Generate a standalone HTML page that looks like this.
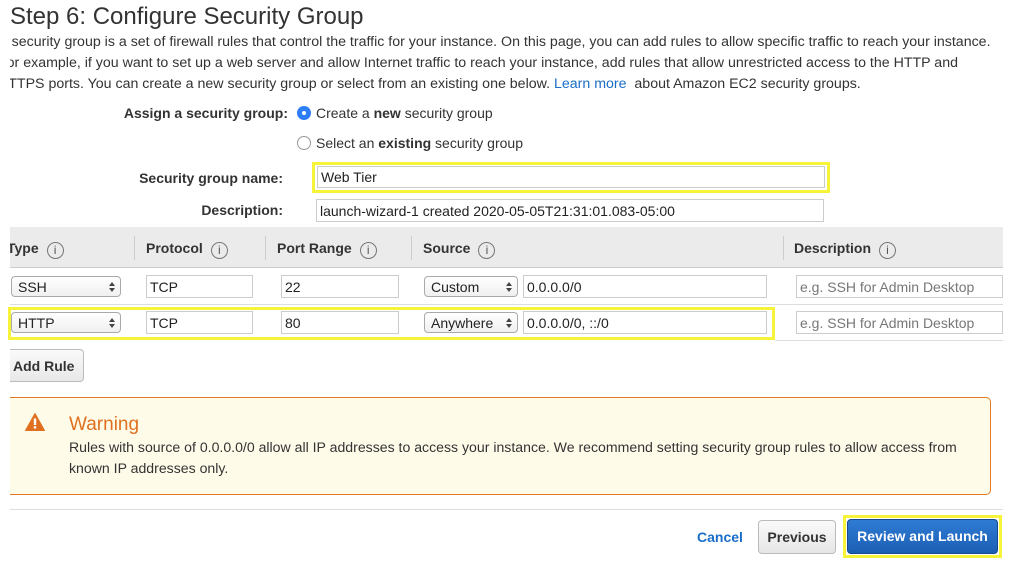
<!DOCTYPE html>
<html><head><meta charset="utf-8"><style>
*{box-sizing:border-box;margin:0;padding:0}
body{width:1009px;height:562px;background:#fff;font-family:"Liberation Sans",Arial,sans-serif;color:#333;position:relative;overflow:hidden;font-size:14px}
.a{position:absolute;white-space:nowrap}
.b{font-weight:bold}
.inp{position:absolute;border:1px solid #ccc;background:#fff;font-size:14px;padding-left:3px;display:flex;align-items:center;color:#222}
.sel{position:absolute;border:1px solid #aaa;border-radius:4px;background:linear-gradient(#fff,#f0f0f0);font-size:14px;padding-left:6px;display:flex;align-items:center;color:#222}
.sel::after{content:"";position:absolute;right:5px;top:50%;margin-top:-5px;width:0;height:0;border-left:3px solid transparent;border-right:3px solid transparent;border-bottom:4px solid #444}
.sel::before{content:"";position:absolute;right:5px;top:50%;margin-top:1px;width:0;height:0;border-left:3px solid transparent;border-right:3px solid transparent;border-top:4px solid #444}
.ic{display:inline-block;width:17px;height:17px;border:1px solid #777;border-radius:50%;font-size:12px;font-weight:normal;text-align:center;line-height:15px;color:#555;margin-left:8px;vertical-align:-1px}
.hd{font-weight:bold;font-size:14px;top:240px}
.sep{position:absolute;top:236px;width:1px;height:24px;background:#ccc}
.ph{color:#777}
</style></head><body>
<div class="a" style="left:10px;top:3px;font-size:24px;color:#333">Step 6: Configure Security Group</div>
<div class="a" style="left:10px;top:32px;width:999px;height:63px;overflow:hidden;font-size:14.2px;line-height:21px">
<div class="a" style="left:-11px;top:0">A security group is a set of firewall rules that control the traffic for your instance. On this page, you can add rules to allow specific traffic to reach your instance.</div>
<div class="a" style="left:-12px;top:21px">For example, if you want to set up a web server and allow Internet traffic to reach your instance, add rules that allow unrestricted access to the HTTP and</div>
<div class="a" style="left:-12px;top:42px">HTTPS ports. You can create a new security group or select from an existing one below. <span style="color:#1a6ec8">Learn more</span>&nbsp; about Amazon EC2 security groups.</div>
</div>
<div class="a b" style="right:721px;top:105px">Assign a security group:</div>
<div class="a" style="left:297px;top:106px;width:14px;height:14px;border-radius:50%;background:#2d7ef7"><div style="position:absolute;left:5px;top:5px;width:4px;height:4px;border-radius:50%;background:#fff"></div></div>
<div class="a" style="left:316px;top:105px">Create a <b>new</b> security group</div>
<div class="a" style="left:297px;top:136px;width:14px;height:14px;border-radius:50%;border:1px solid #999;background:#fff"></div>
<div class="a" style="left:316px;top:135px">Select an <b>existing</b> security group</div>
<div class="a b" style="right:726px;top:170px">Security group name:</div>
<div class="a" style="left:312px;top:162px;width:518px;height:31px;border:3px solid #f7f33b"></div>
<div class="inp" style="left:317px;top:166px;width:508px;height:22px">Web Tier</div>
<div class="a b" style="right:726px;top:202px">Description:</div>
<div class="inp" style="left:316px;top:199px;width:508px;height:23px">launch-wizard-1 created 2020-05-05T21:31:01.083-05:00</div>

<div class="a" style="left:10px;top:227px;width:993px;height:41px;background:#ebebeb;border-bottom:1px solid #ccc"></div>
<div class="a" style="left:10px;top:227px;width:120px;height:160px;overflow:hidden">
<div class="a hd" style="left:-3px;top:13px">Type<span class="ic">i</span></div>
<div class="a b" style="left:-10px;top:122px;width:84px;height:33px;border:1px solid #bbb;border-radius:4px;background:linear-gradient(#fafafa,#e8e8e8);padding:8px 0 0 12px">Add Rule</div>
</div>
<div class="sep" style="left:134px"></div>
<div class="a hd" style="left:146px">Protocol<span class="ic">i</span></div>
<div class="sep" style="left:265px"></div>
<div class="a hd" style="left:277px">Port Range<span class="ic">i</span></div>
<div class="sep" style="left:411px"></div>
<div class="a hd" style="left:423px">Source<span class="ic">i</span></div>
<div class="sep" style="left:783px"></div>
<div class="a hd" style="left:794px">Description<span class="ic">i</span></div>

<div class="sel" style="left:11px;top:276px;width:110px;height:21px">SSH</div>
<div class="inp" style="left:146px;top:275px;width:107px;height:23px">TCP</div>
<div class="inp" style="left:281px;top:275px;width:118px;height:23px">22</div>
<div class="sel" style="left:424px;top:276px;width:94px;height:21px">Custom</div>
<div class="inp" style="left:523px;top:275px;width:244px;height:23px">0.0.0.0/0</div>
<div class="inp ph" style="left:796px;top:275px;width:207px;height:23px">e.g. SSH for Admin Desktop</div>
<div class="a" style="left:10px;top:304px;width:993px;height:1px;background:#ddd"></div>

<div class="a" style="left:8px;top:307px;width:767px;height:33px;border:3px solid #f7f33b"></div>
<div class="sel" style="left:11px;top:312px;width:110px;height:21px">HTTP</div>
<div class="inp" style="left:146px;top:311px;width:107px;height:23px">TCP</div>
<div class="inp" style="left:281px;top:311px;width:118px;height:23px">80</div>
<div class="sel" style="left:424px;top:312px;width:94px;height:21px">Anywhere</div>
<div class="inp" style="left:523px;top:311px;width:244px;height:23px">0.0.0.0/0, ::/0</div>
<div class="inp ph" style="left:796px;top:311px;width:207px;height:23px">e.g. SSH for Admin Desktop</div>
<div class="a" style="left:775px;top:340px;width:228px;height:1px;background:#ddd"></div>

<div class="a" style="left:10px;top:397px;width:981px;height:98px;background:#fffbe9;border:1px solid #e07b24;border-left:none;border-radius:0 5px 5px 0"></div>
<svg class="a" style="left:25px;top:413px" width="20" height="18" viewBox="0 0 20 18"><path d="M10 0.5 L19.5 17.5 L0.5 17.5 Z" fill="#e0701f" stroke="#e0701f" stroke-linejoin="round"/><rect x="8.8" y="5.5" width="2.4" height="6.5" fill="#fff"/><rect x="8.8" y="13.2" width="2.4" height="2.4" fill="#fff"/></svg>
<div class="a" style="left:69px;top:414px;font-size:19px;color:#e0701f">Warning</div>
<div class="a" style="left:69px;top:437px;font-size:14.1px;line-height:21px">Rules with source of 0.0.0.0/0 allow all IP addresses to access your instance. We recommend setting security group rules to allow access from<br>known IP addresses only.</div>

<div class="a" style="left:10px;top:509px;width:993px;height:1px;background:#ddd"></div>
<div class="a b" style="left:697px;top:529px;color:#1a6ec8">Cancel</div>
<div class="a b" style="left:758px;top:520px;width:78px;height:34px;border:1px solid #bbb;border-radius:4px;background:linear-gradient(#fafafa,#e6e6e6);text-align:center;line-height:32px;color:#333">Previous</div>
<div class="a" style="left:843px;top:515px;width:159px;height:43px;border:3px solid #f7f33b"></div>
<div class="a b" style="left:847px;top:519px;width:151px;height:35px;border:1px solid #16498f;border-radius:4px;background:linear-gradient(#2f7bd4,#1b5fb4);text-align:center;line-height:33px;color:#fff">Review and Launch</div>
</body></html>
